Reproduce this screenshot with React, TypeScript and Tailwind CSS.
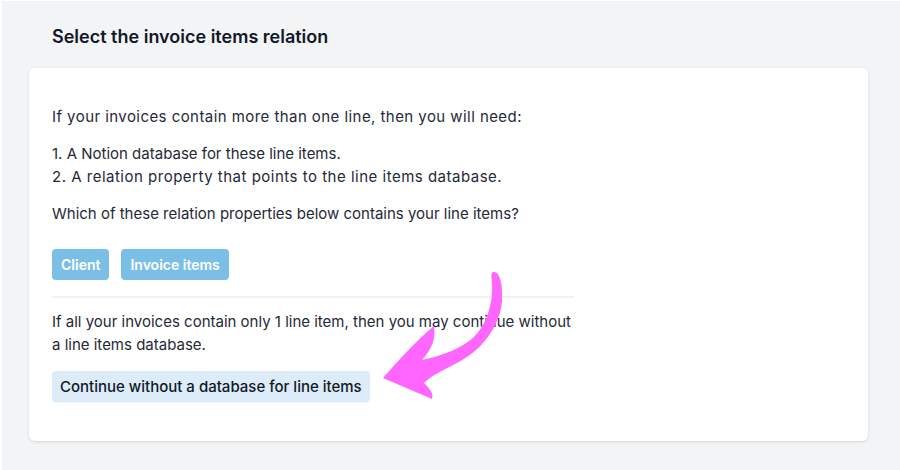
const Arrow = () => (
  <svg
    className="absolute left-0 top-0 pointer-events-none"
    width="900"
    height="470"
    viewBox="0 0 900 470"
  >
    <path
      d="M 491 271 C 497 270 501 280 500 300 C 498 325 480 350 453 363 C 440 370 430 374 422 382 C 428 388 432 393 430 398 L 381 377 C 396 360 414 340 432 325 C 434 337 430 348 420 359 C 440 355 460 347 472 336 C 486 322 491 300 490 283 C 490 277 488 273 491 271 Z"
      fill="#ff66ff"
    />
  </svg>
);

export default function App() {
  return (
    <div
      className="relative w-[900px] h-[470px] bg-[#f3f4f6] border-t border-l-2 border-white text-[#1f2937] overflow-hidden"
      style={{ fontFamily: "Inter, 'Noto Sans', sans-serif" }}
    >
      <div className="pl-[27px] pr-[32px]">
        <h1 className="pl-[23px] pt-[22px] h-[67px] text-[18px] font-semibold leading-[27px] text-[#111827]">
          Select the invoice items relation
        </h1>
        <div className="bg-white rounded-md shadow-[0_1px_3px_rgba(0,0,0,0.12)] h-[373px] pl-[23px] pt-[37px]">
          <div className="w-[522px] text-[15px] leading-[23px]">
            <p className="tracking-[0.44px]">
              If your invoices contain more than one line, then you will need:
            </p>
            <ol className="mt-[14px]">
              <li>1. A Notion database for these line items.</li>
              <li className="tracking-[0.5px]">
                2. A relation property that points to the line items database.
              </li>
            </ol>
            <p className="mt-[14px]">
              Which of these relation properties below contains your line items?
            </p>
            <div className="flex gap-3 mt-[24px]">
              <button className="h-[31px] px-[9px] rounded bg-[#7cbfe6] text-white font-semibold text-[14px]">
                Client
              </button>
              <button className="h-[31px] px-[9px] rounded bg-[#7cbfe6] text-white font-semibold text-[14px]">
                Invoice items
              </button>
            </div>
            <div className="mt-[16px] h-[2px] bg-[#f1f1f3]" />
            <p className="mt-[12px] whitespace-nowrap">
              If all your invoices contain only 1 line item, then you may continue without
              <br />
              a line items database.
            </p>
            <button className="mt-[15px] h-[31px] px-[8px] rounded bg-[#dcecf8] text-[#111827] font-medium text-[15px] shadow-[0_1px_1px_rgba(0,0,0,0.04)]">
              Continue without a database for line items
            </button>
          </div>
        </div>
      </div>
      <Arrow />
    </div>
  );
}
